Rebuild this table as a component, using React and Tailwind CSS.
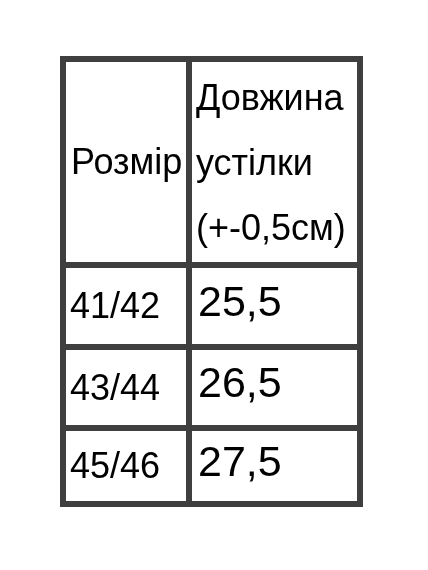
import React from "react";

const rows = [
  { size: "41/42", len: "25,5", h: "h-[76px]" },
  { size: "43/44", len: "26,5", h: "h-[75px]" },
  { size: "45/46", len: "27,5", h: "h-[70px]" },
];

export default function App() {
  return (
    <div className="w-[428px] h-[570px] bg-white pt-[56px] pl-[60px] font-['Liberation_Sans',Arial,sans-serif] text-black">
      <div className="w-[303px] grid grid-cols-[120px_165px] gap-[6px] p-[6px] bg-[#3f3f3f] blur-[0.5px]">
        <div className="bg-white h-[200px] flex items-center pl-[5px] text-[36px]">
          Розмір
        </div>
        <div className="bg-white h-[200px] flex flex-col justify-center pl-[4px] text-[36px] leading-[65px]">
          <span>Довжина</span>
          <span>устілки</span>
          <span>(+-0,5см)</span>
        </div>
        {rows.map((r) => (
          <React.Fragment key={r.size}>
            <div className={`bg-white ${r.h} flex items-center pl-[4px] text-[36px]`}>
              {r.size}
            </div>
            <div className={`bg-white ${r.h} flex items-center pl-[6px] pb-[10px] text-[43px]`}>
              {r.len}
            </div>
          </React.Fragment>
        ))}
      </div>
    </div>
  );
}
